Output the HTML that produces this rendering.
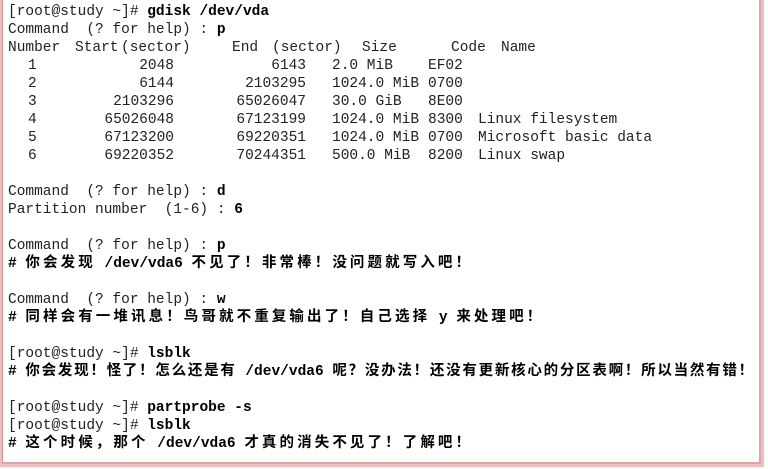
<!DOCTYPE html>
<html><head><meta charset="utf-8"><style>
html,body{margin:0;padding:0;background:#fff;width:768px;height:469px;overflow:hidden}
.box{position:absolute;left:0;top:-4px;width:759px;height:466px;border:2px solid #f3bcbc;border-right:3px solid #f3bcbc;border-bottom:3px solid #f3bcbc;box-shadow:inset -2px -2px 0 #d9a6a6, inset 1px 0 0 #c89a9a}
.l{position:absolute;left:8px;height:18px;white-space:pre;font-family:"Liberation Mono","Noto Sans CJK SC",monospace;font-size:14.5px;line-height:18px;color:#222}
.l span{position:absolute;top:0;white-space:pre}
b{font-weight:bold;color:#000}
.c{font-weight:bold;color:#000}
.c i{font-style:normal;letter-spacing:3.1px}
.c.n i{letter-spacing:1.75px}
.r{text-align:right}
</style></head><body>
<div class="box"></div>
<div class="l" style="top:3px">[root@study ~]# <b>gdisk /dev/vda</b></div>
<div class="l" style="top:21px">Command  (? for help) : <b>p</b></div>
<div class="l" style="top:39px;width:700px"><span style="left:0">Number</span><span style="left:67px">Start</span><span style="left:113px">(sector)</span><span style="left:224px">End</span><span style="left:264px">(sector)</span><span style="left:354px">Size</span><span style="left:443px">Code</span><span style="left:493px">Name</span></div>
<div class="l" style="top:57px;width:700px"><span style="left:20px">1</span><span style="left:102px;width:64px" class="r">2048</span><span style="left:234px;width:64px" class="r">6143</span><span style="left:324px">2.0 MiB</span><span style="left:420px">EF02</span></div>
<div class="l" style="top:75px;width:700px"><span style="left:20px">2</span><span style="left:102px;width:64px" class="r">6144</span><span style="left:224px;width:74px" class="r">2103295</span><span style="left:324px">1024.0 MiB</span><span style="left:420px">0700</span></div>
<div class="l" style="top:93px;width:700px"><span style="left:20px">3</span><span style="left:92px;width:74px" class="r">2103296</span><span style="left:224px;width:74px" class="r">65026047</span><span style="left:324px">30.0 GiB</span><span style="left:420px">8E00</span></div>
<div class="l" style="top:111px;width:700px"><span style="left:20px">4</span><span style="left:92px;width:74px" class="r">65026048</span><span style="left:224px;width:74px" class="r">67123199</span><span style="left:324px">1024.0 MiB</span><span style="left:420px">8300</span><span style="left:470px">Linux filesystem</span></div>
<div class="l" style="top:129px;width:700px"><span style="left:20px">5</span><span style="left:92px;width:74px" class="r">67123200</span><span style="left:224px;width:74px" class="r">69220351</span><span style="left:324px">1024.0 MiB</span><span style="left:420px">0700</span><span style="left:470px">Microsoft basic data</span></div>
<div class="l" style="top:147px;width:700px"><span style="left:20px">6</span><span style="left:92px;width:74px" class="r">69220352</span><span style="left:224px;width:74px" class="r">70244351</span><span style="left:324px">500.0 MiB</span><span style="left:420px">8200</span><span style="left:470px">Linux swap</span></div>
<div class="l" style="top:183px">Command  (? for help) : <b>d</b></div>
<div class="l" style="top:201px">Partition number  (1-6) : <b>6</b></div>
<div class="l" style="top:237px">Command  (? for help) : <b>p</b></div>
<div class="l c" style="top:255px"># <i>你会发现</i> /dev/vda6 <i>不见了！非常棒！没问题就写入吧！</i></div>
<div class="l" style="top:291px">Command  (? for help) : <b>w</b></div>
<div class="l c" style="top:309px"># <i>同样会有一堆讯息！鸟哥就不重复输出了！自己选择</i> y <i>来处理吧！</i></div>
<div class="l" style="top:345px">[root@study ~]# <b>lsblk</b></div>
<div class="l c n" style="top:363px"># <i>你会发现！怪了！怎么还是有</i> /dev/vda6 <i>呢？没办法！还没有更新核心的分区表啊！所以当然有错！</i></div>
<div class="l" style="top:399px">[root@study ~]# <b>partprobe -s</b></div>
<div class="l" style="top:417px">[root@study ~]# <b>lsblk</b></div>
<div class="l c" style="top:435px"># <i>这个时候，那个</i> /dev/vda6 <i>才真的消失不见了！了解吧！</i></div>
</body></html>
